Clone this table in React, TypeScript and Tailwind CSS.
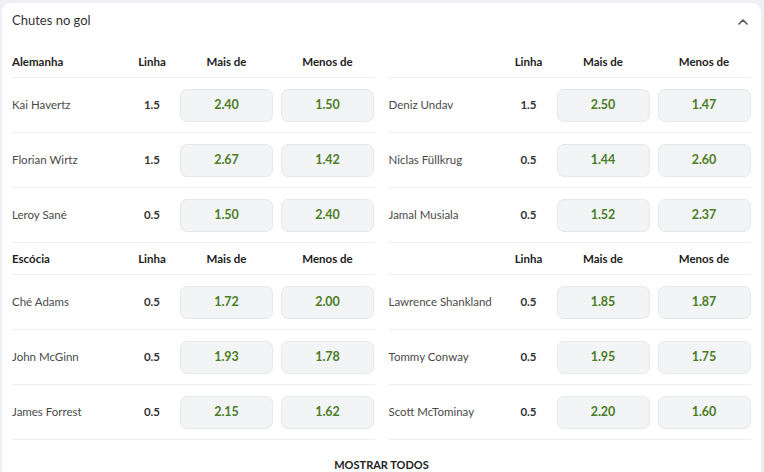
const TEAMS = [
  {
    name: "Alemanha",
    left: [
      { player: "Kai Havertz", line: "1.5", over: "2.40", under: "1.50" },
      { player: "Florian Wirtz", line: "1.5", over: "2.67", under: "1.42" },
      { player: "Leroy Sané", line: "0.5", over: "1.50", under: "2.40" },
    ],
    right: [
      { player: "Deniz Undav", line: "1.5", over: "2.50", under: "1.47" },
      { player: "Niclas Füllkrug", line: "0.5", over: "1.44", under: "2.60" },
      { player: "Jamal Musiala", line: "0.5", over: "1.52", under: "2.37" },
    ],
  },
  {
    name: "Escócia",
    left: [
      { player: "Ché Adams", line: "0.5", over: "1.72", under: "2.00" },
      { player: "John McGinn", line: "0.5", over: "1.93", under: "1.78" },
      { player: "James Forrest", line: "0.5", over: "2.15", under: "1.62" },
    ],
    right: [
      { player: "Lawrence Shankland", line: "0.5", over: "1.85", under: "1.87" },
      { player: "Tommy Conway", line: "0.5", over: "1.95", under: "1.75" },
      { player: "Scott McTominay", line: "0.5", over: "2.20", under: "1.60" },
    ],
  },
];

type Row = { player: string; line: string; over: string; under: string };

function OddButton({ value }: { value: string }) {
  return (
    <button className="w-[93px] h-[33px] rounded-[7px] bg-[#f3f4f6] border border-[#e6e8eb] text-[12.5px] font-bold text-[#4b7d26]">
      {value}
    </button>
  );
}

function Column({ title, rows }: { title: string; rows: Row[] }) {
  return (
    <div className="flex-1">
      {/* header */}
      <div className="flex items-center h-[32px] border-b border-[#eceef0] text-[11.5px] font-bold text-[#222]">
        <div className="w-[118px]">{title}</div>
        <div className="w-[44px] text-center">Linha</div>
        <div className="w-[93px] ml-[6px] text-center">Mais de</div>
        <div className="w-[93px] ml-[8px] text-center">Menos de</div>
      </div>
      {rows.map(r => (
        <div key={r.player} className="flex items-center h-[55px] border-b border-[#eceef0] text-[11.5px]">
          <div className="w-[118px] text-[#4a4a4a]">{r.player}</div>
          <div className="w-[44px] text-center font-bold text-[#333]">{r.line}</div>
          <div className="ml-[6px] flex gap-[8px]">
            <OddButton value={r.over} />
            <OddButton value={r.under} />
          </div>
        </div>
      ))}
    </div>
  );
}

export default function App() {
  return (
    <main className="min-h-screen bg-[#eef0f3] pt-[3px] pl-[2px] pr-[3px]" style={{ fontFamily: "Lato, 'Noto Sans', sans-serif" }}>
      <div className="bg-white rounded-t-[9px] px-[10px] pb-[6px]">
        {/* title */}
        <div className="flex items-start justify-between h-[43px] pt-[8px]">
          <span className="text-[13px] text-[#333]">Chutes no gol</span>
          <svg width="10" height="6" viewBox="0 0 10 6" className="mt-[8px] mr-[3px]">
            <path d="M1 5 L5 1 L9 5" fill="none" stroke="#555" strokeWidth="1.6" strokeLinecap="round" strokeLinejoin="round" />
          </svg>
        </div>

        {TEAMS.map(t => (
          <div key={t.name} className="flex gap-[14px]">
            <Column title={t.name} rows={t.left} />
            <Column title="" rows={t.right} />
          </div>
        ))}

        <div className="flex justify-center pt-[17px]">
          <span className="text-[11px] font-bold text-[#222] uppercase">Mostrar todos</span>
        </div>
      </div>
    </main>
  );
}
